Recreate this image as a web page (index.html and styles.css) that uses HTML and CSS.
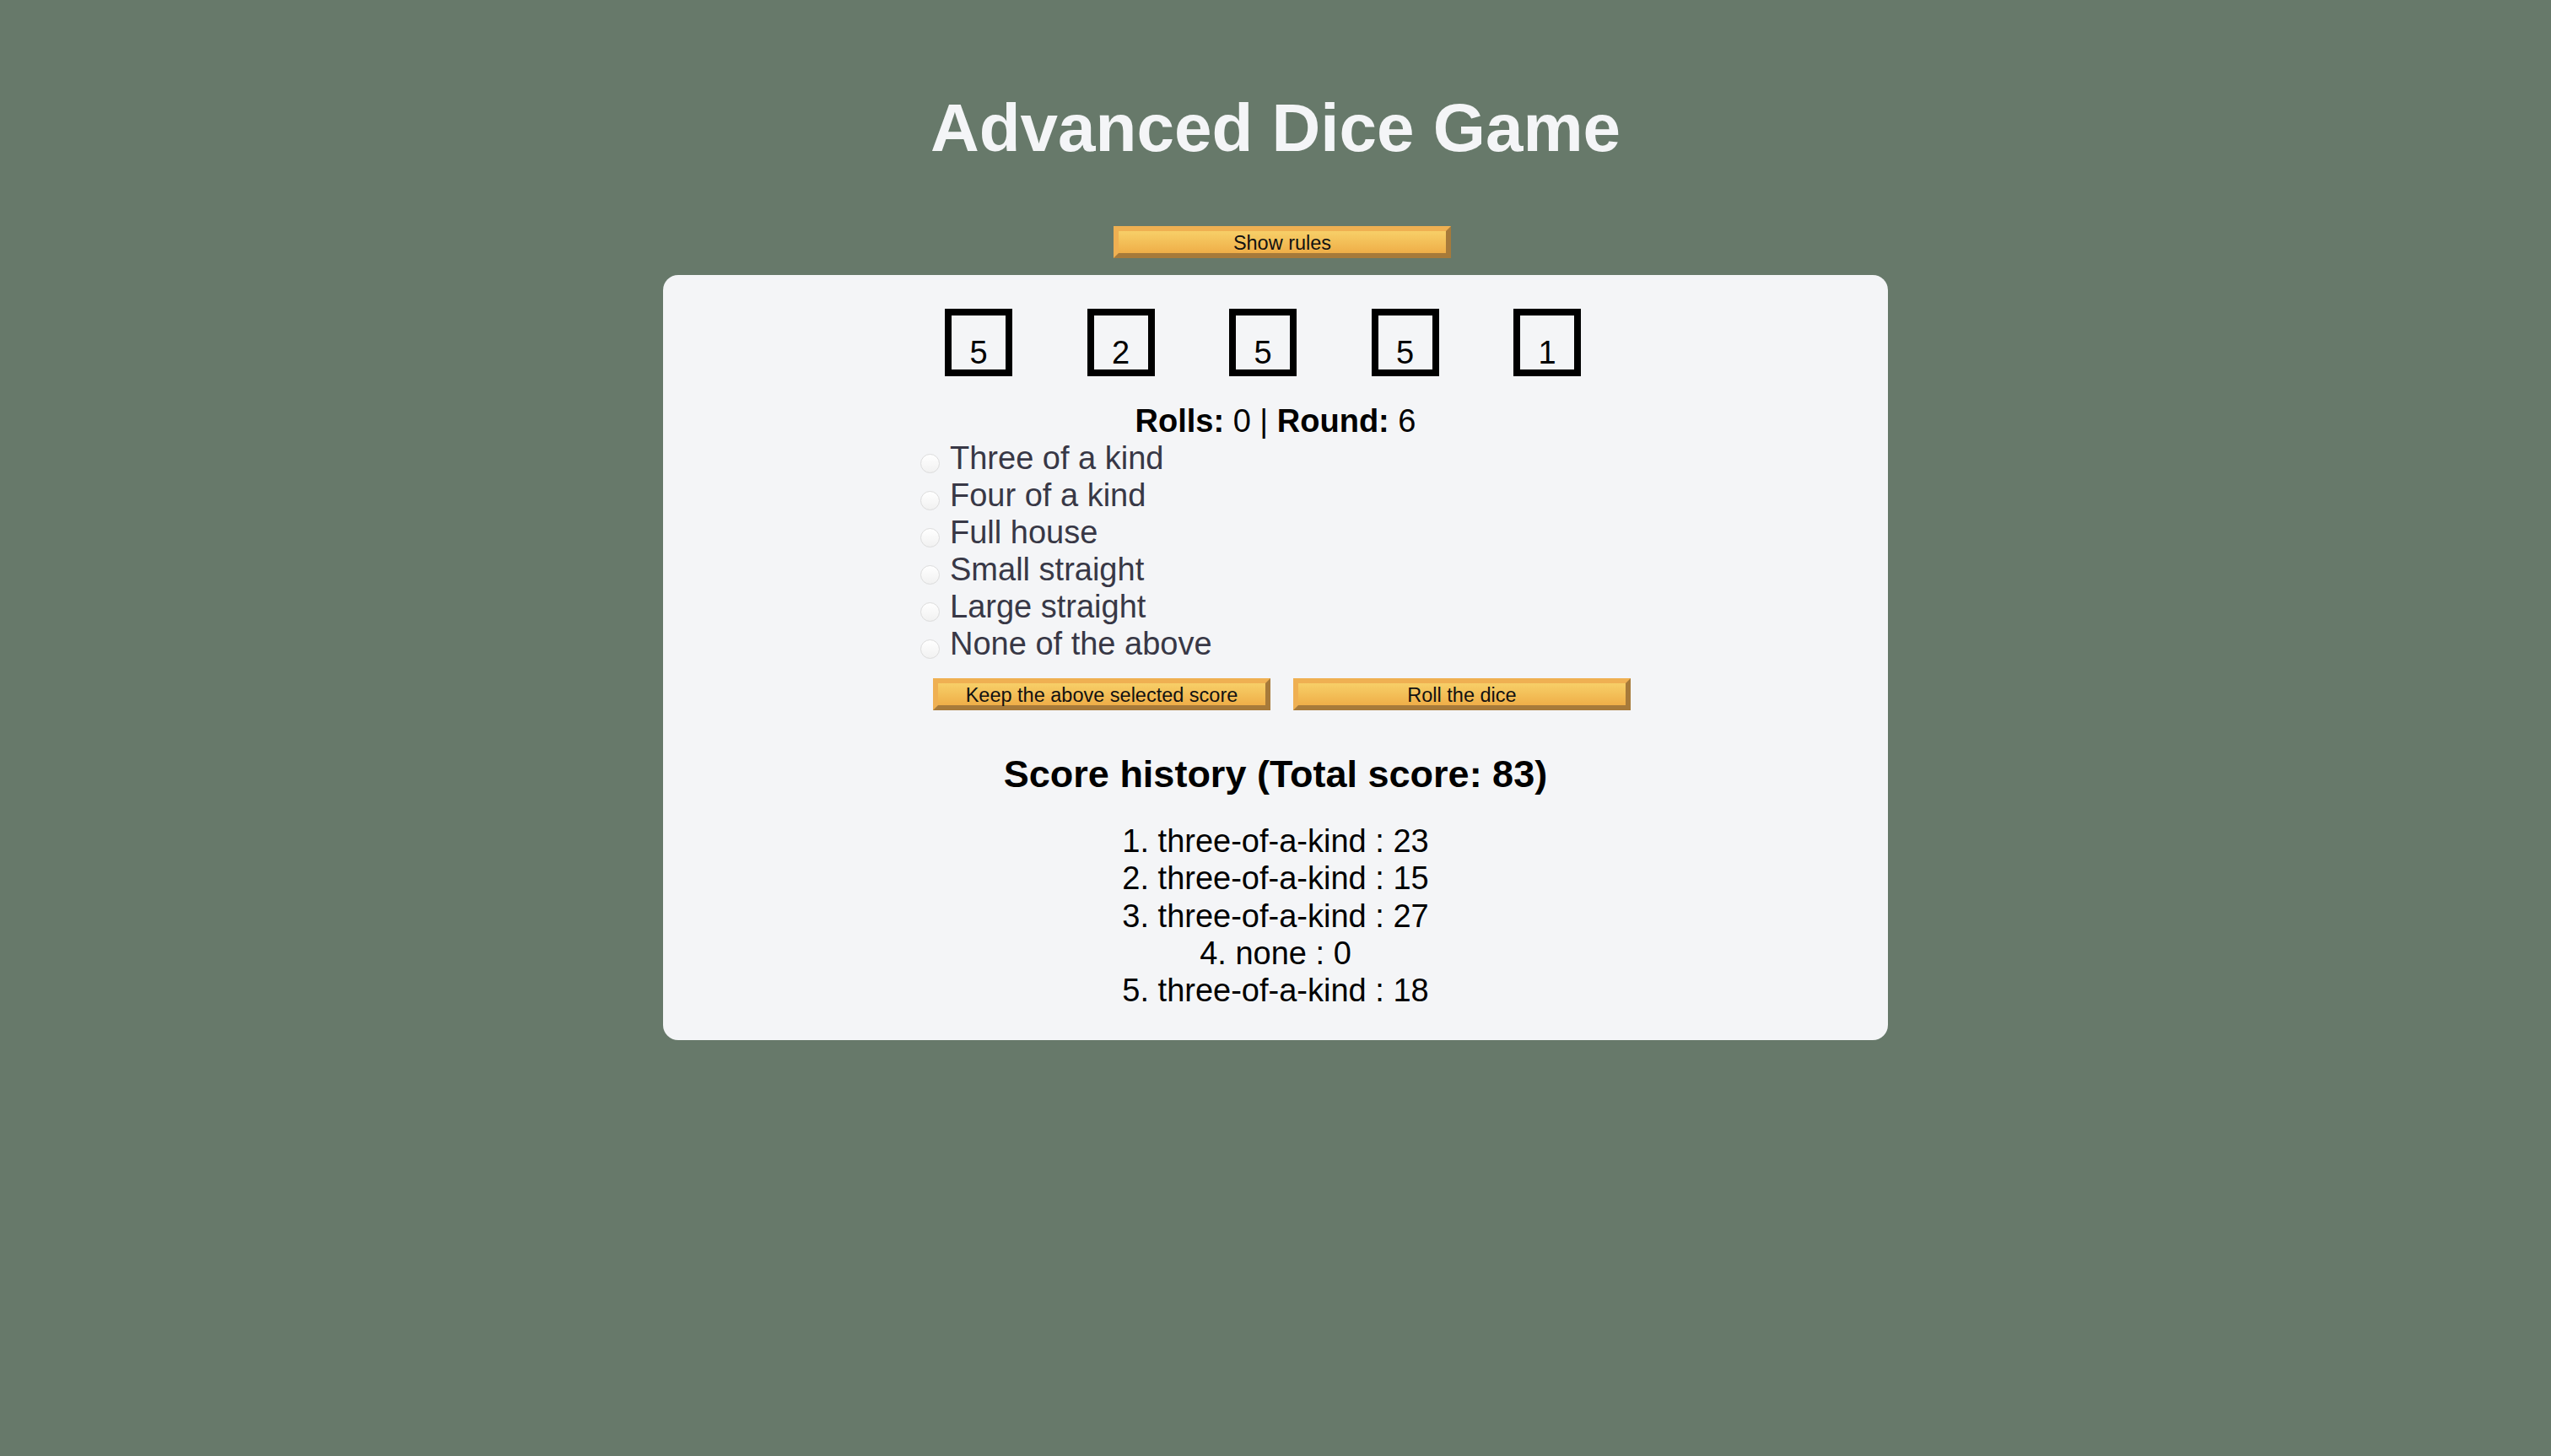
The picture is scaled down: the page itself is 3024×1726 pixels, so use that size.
FILE: index.html
```html
<!DOCTYPE html>
<html lang="en">
<head>
<meta charset="utf-8">
<title>Advanced Dice Game</title>
<link rel="stylesheet" href="styles.css">
</head>
<body>
  <h1 class="title">Advanced Dice Game</h1>
  <div class="rules-row">
    <button class="btn btn-rules" type="button">Show rules</button>
  </div>
  <main class="card">
    <div class="dice-row">
      <div class="die">5</div>
      <div class="die">2</div>
      <div class="die">5</div>
      <div class="die">5</div>
      <div class="die">1</div>
    </div>
    <p class="status"><strong>Rolls:</strong> 0 | <strong>Round:</strong> 6</p>
    <div class="controls">
      <div class="options">
        <label class="option"><input type="radio" name="score" class="radio"><span>Three of a kind</span></label>
        <label class="option"><input type="radio" name="score" class="radio"><span>Four of a kind</span></label>
        <label class="option"><input type="radio" name="score" class="radio"><span>Full house</span></label>
        <label class="option"><input type="radio" name="score" class="radio"><span>Small straight</span></label>
        <label class="option"><input type="radio" name="score" class="radio"><span>Large straight</span></label>
        <label class="option"><input type="radio" name="score" class="radio"><span>None of the above</span></label>
      </div>
      <div class="actions">
        <button class="btn" type="button">Keep the above selected score</button>
        <button class="btn" type="button">Roll the dice</button>
      </div>
    </div>
    <h2 class="history-title">Score history (Total score: 83)</h2>
    <ol class="history">
      <li>1. three-of-a-kind : 23</li>
      <li>2. three-of-a-kind : 15</li>
      <li>3. three-of-a-kind : 27</li>
      <li>4. none : 0</li>
      <li>5. three-of-a-kind : 18</li>
    </ol>
  </main>
</body>
</html>
```
FILE: styles.css
```css
html, body {
  margin: 0;
  padding: 0;
}

body {
  background: #67796a;
  font-family: "Liberation Sans", Arial, Helvetica, sans-serif;
  color: #000;
}

.title {
  margin: 106px 0 0;
  font-size: 80px;
  line-height: 92px;
  font-weight: bold;
  text-align: center;
  color: #f4f5f7;
}

.rules-row {
  display: flex;
  justify-content: center;
  padding-left: 16px;
  margin-top: 70px;
}

.btn {
  box-sizing: border-box;
  width: 400px;
  height: 38px;
  padding: 2px 0 0;
  margin: 0;
  border-style: solid;
  border-width: 6px;
  border-color: #efb052 #a77a3a #a77a3a #efb052;
  background: linear-gradient(to bottom, #f7cf68 0%, #f3bf58 50%, #efae48 100%);
  font-family: "Liberation Sans", Arial, Helvetica, sans-serif;
  font-size: 23.5px;
  line-height: 24px;
  color: #111;
  text-align: center;
  cursor: pointer;
}

.card {
  display: block;
  box-sizing: border-box;
  width: 1452px;
  margin: 20px auto 0;
  padding: 40px 0 37px;
  background: #f4f5f7;
  border-radius: 18px;
}

.dice-row {
  display: flex;
  justify-content: center;
  gap: 88.5px;
  padding-right: 30px;
}

.die {
  box-sizing: border-box;
  width: 80px;
  height: 80px;
  border: 8px solid #000;
  padding-top: 22px;
  font-size: 38px;
  line-height: 44px;
  text-align: center;
  color: #000;
}

.status {
  margin: 31px 0 0;
  font-size: 38px;
  line-height: 44px;
  text-align: center;
  color: #000;
}

.status strong {
  font-weight: bold;
}

.controls {
  width: 842px;
  margin: 0 auto;
}

.options {
  display: flex;
  flex-direction: column;
}

.option {
  display: flex;
  align-items: flex-start;
  font-size: 38px;
  line-height: 44px;
  color: #383846;
}

.radio {
  -webkit-appearance: none;
  appearance: none;
  box-sizing: border-box;
  width: 23px;
  height: 23px;
  margin: 17px 12px 0 0;
  border: 1px solid #dcdcdc;
  border-radius: 50%;
  background: linear-gradient(to bottom, #ffffff, #f1f1f1);
  flex: none;
}

.actions {
  display: flex;
  justify-content: flex-end;
  gap: 27px;
  margin-top: 19px;
}

.history-title {
  margin: 51px 0 0;
  font-size: 45px;
  line-height: 50px;
  font-weight: bold;
  text-align: center;
  color: #000;
}

.history {
  list-style: none;
  margin: 32px 0 0;
  padding: 0;
  font-size: 38px;
  line-height: 44.25px;
  text-align: center;
  color: #000;
}
```
